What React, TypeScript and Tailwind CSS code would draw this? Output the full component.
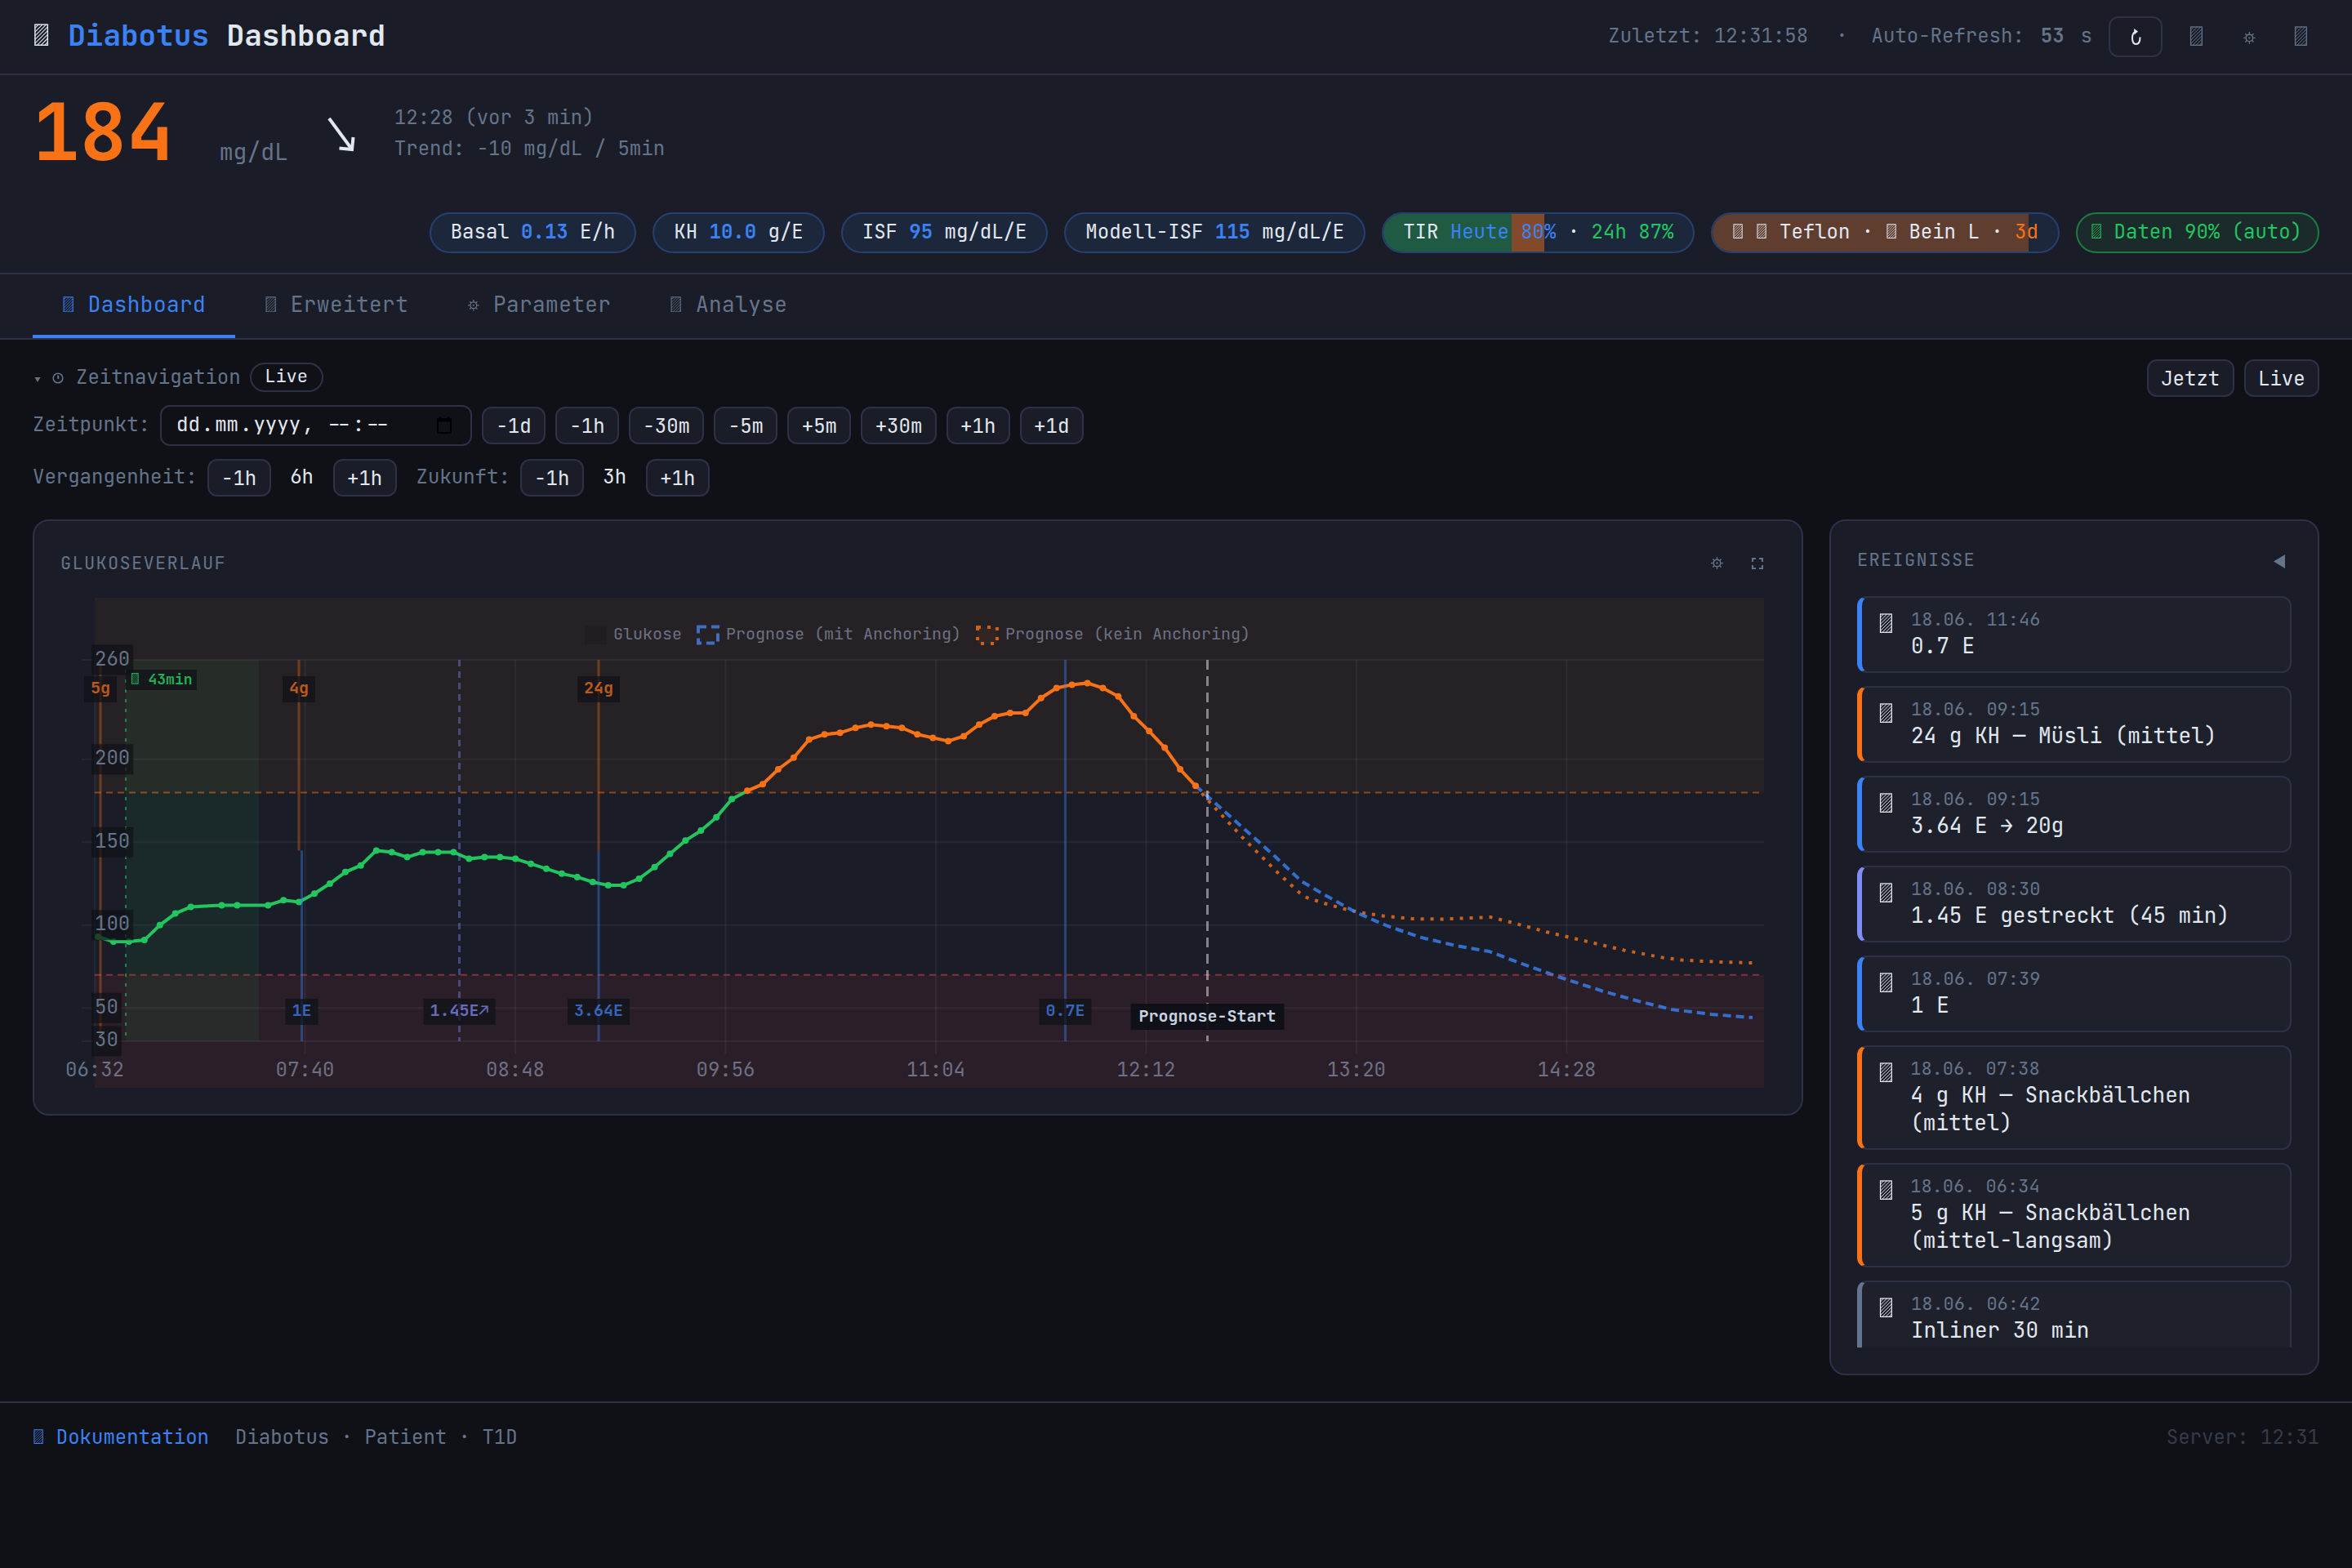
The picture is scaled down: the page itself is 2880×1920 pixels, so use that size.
import React, { useState } from "react";

const MONO = "font-['JetBrains_Mono','DejaVu_Sans_Mono',monospace]";

// hatched rectangle strokes, in 1/100 em
const hatch = (() => {
  const [x0, y0, x1, y1] = [8, 3, 51, 73];
  let d = "";
  for (let c = x0 + y0 + 12; c < x1 + y1; c += 13) {
    const ax = Math.max(x0, c - y1);
    const bx = Math.min(x1, c - y0);
    d += `M${ax} ${c - ax}L${bx} ${c - bx}`;
  }
  return d;
})();

const Box = () => (
  <svg viewBox="0 0 60 76" className="inline-block h-[0.76em] w-[0.6em] align-[-0.01em]" fill="none" stroke="currentColor">
    <rect x="8" y="3" width="43" height="70" strokeWidth="4" />
    <path d={hatch} strokeWidth="3" />
  </svg>
);

const Gear = ({ className = "h-[0.6em] w-[0.6em]" }: { className?: string }) => (
  <svg viewBox="0 0 60 60" className={`inline-block align-[0.02em] ${className}`} fill="none" stroke="currentColor">
    <circle cx="30" cy="30" r="15" strokeWidth="5" />
    <circle cx="30" cy="30" r="4" fill="currentColor" stroke="none" />
    <path
      d="M30 4V13M30 47V56M4 30H13M47 30H56M12 12L19 19M41 41L48 48M48 12L41 19M19 41L12 48"
      strokeWidth="5"
    />
  </svg>
);

const Pill = ({ children }: { children: React.ReactNode }) => (
  <div className="relative flex h-[50px] items-center overflow-hidden rounded-full border-2 border-[#25406f] bg-[#1d273b] px-6 pb-[2px] whitespace-pre">
    {children}
  </div>
);

const Btn = ({ children }: { children: React.ReactNode }) => (
  <button className="h-[46px] rounded-xl border-2 border-[#2d3148] bg-[#1a1d27] px-[15.4px] pt-px leading-none whitespace-pre text-[#e2e8f0]">
    {children}
  </button>
);

const Header = () => (
  <header className="flex h-[92px] items-center justify-between border-b-2 border-[#2d3148] bg-[#1a1d27] px-10">
    <h1 className="mb-[5px] text-4xl leading-none font-bold whitespace-pre">
      <Box /> <span className="text-[#3b82f6]">Diabotus</span> Dashboard
    </h1>
    <div className="flex items-center gap-5 text-[#64748b]">
      <span className="mb-[3px]">Zuletzt: 12:31:58</span>
      <span className="mr-[9px] mb-[3px] ml-[14px]">·</span>
      <span className="mb-[3px]">Auto-Refresh:</span>
      <span className="mb-[3px] font-bold">53</span>
      <span className="mb-[3px]">s</span>
      <button className="flex h-[50px] w-[66px] items-center justify-center rounded-xl border-2 border-[#2d3148] text-[#e2e8f0]">
        <svg width="13" height="22" viewBox="0 0 13 22" fill="none" stroke="currentColor" strokeWidth="2">
          <path d="M5 5C2.500 7 2 9.500 2 12.500C2 17 3.500 20 6.500 20C9.500 20 11.500 17.500 11.500 11.500" />
          <path d="M4 1L9 4.500L4.500 8.500Z" fill="currentColor" stroke="none" />
        </svg>
      </button>
      <span className="w-11 text-center text-[32px] leading-none"><Box /></span>
      <span className="w-11 text-center text-[28px] leading-none"><Gear /></span>
      <span className="w-11 text-center text-[32px] leading-none"><Box /></span>
    </div>
  </header>
);

const Status = () => (
  <section className="flex h-[244px] flex-col justify-between border-b-2 border-[#2d3148] bg-[#1a1d27] px-10 pb-6">
    <div className="flex pt-[22px]">
      <div className="text-[96px] leading-[96px] font-bold text-[#f97316]">184</div>
      <div className="ml-[56px] pt-[58px] text-[28px] leading-[28px] text-[#64748b]">mg/dL</div>
      <svg className="mt-[27px] ml-[46px] shrink-0" width="40" height="48" viewBox="0 0 40 48" fill="none" stroke="#e2e8f0" strokeWidth="4">
        <path d="M4 4L32 42" />
        <path d="M16.500 40.500L32 42L33.500 27" />
      </svg>
      <div className="ml-[44px] pt-[11px] leading-[38px] text-[#64748b]">
        <div>12:28 (vor 3 min)</div>
        <div>Trend: −10 mg/dL / 5min</div>
      </div>
    </div>
    <div className="flex justify-end gap-5">
      <Pill>Basal <b className="text-[#3b82f6]">0.13</b> E/h</Pill>
      <Pill>KH <b className="text-[#3b82f6]">10.0</b> g/E</Pill>
      <Pill>ISF <b className="text-[#3b82f6]">95</b> mg/dL/E</Pill>
      <Pill>Modell-ISF <b className="text-[#3b82f6]">115</b> mg/dL/E</Pill>
      <Pill>
        <span className="absolute inset-y-0 left-0 w-[157px] bg-[#1f5a43]" />
        <span className="absolute inset-y-0 left-[157px] w-10 bg-[#824a2a]" />
        <span className="relative">
          TIR <span className="text-[#3b82f6]">Heute 80%</span> · <span className="text-[#22c55e]">24h 87%</span>
        </span>
      </Pill>
      <Pill>
        <span className="absolute inset-y-0 left-0 w-[387px] bg-[#5f3e30]" />
        <span className="relative">
          <Box /> <Box /> Teflon · <Box /> Bein L · <span className="text-[#f97316]">3d</span>
        </span>
      </Pill>
      <div className="flex h-[50px] items-center rounded-full border-2 border-[#1e7a42] bg-[#1b2a2a] pr-[19px] pl-4 pb-[2px] whitespace-pre text-[#22c55e]">
        <span><Box /> Daten 90% (auto)</span>
      </div>
    </div>
  </section>
);

const tabs = ["Dashboard", "Erweitert", "Parameter", "Analyse"];

const Tabs = () => {
  const [active, setActive] = useState("Dashboard");
  return (
    <nav className="flex h-20 border-b-2 border-[#2d3148] bg-[#1a1d27] px-10 text-[26px] tracking-[0.45px]">
      {tabs.map((tab) => (
        <button
          key={tab}
          onClick={() => setActive(tab)}
          className={`border-b-4 px-9 leading-none whitespace-pre ${
            active === tab ? "border-[#3b82f6] text-[#3b82f6]" : "border-transparent text-[#64748b]"
          }`}
        >
          {tab === "Parameter" ? <Gear /> : <Box />} {tab}
        </button>
      ))}
    </nav>
  );
};

const steps = ["−1d", "−1h", "−30m", "−5m", "+5m", "+30m", "+1h", "+1d"];

const TimeNav = () => (
  <section className="px-10 pt-6 text-[#64748b]">
    <div className="flex h-[46px] items-center">
      <svg width="12" height="10" viewBox="0 0 12 10" className="mt-[3px]">
        <path d="M2.500 2H9.500L6 8Z" fill="currentColor" />
      </svg>
      <svg width="14" height="14" viewBox="0 0 14 14" className="ml-[12px]" fill="none" stroke="currentColor" strokeWidth="1.6">
        <circle cx="7" cy="7" r="5.800" />
        <path d="M7 3.500V7.500M7.500 4V8" />
      </svg>
      <span className="mb-[3px] ml-[15px]">Zeitnavigation</span>
      <span className="mt-[-2px] ml-[11px] flex h-9 w-[90px] items-center justify-center rounded-full border-2 border-[#2d3148] pb-[3px] text-[22px] text-[#e2e8f0]">
        Live
      </span>
      <div className="ml-auto flex gap-3">
        <Btn>Jetzt</Btn>
        <Btn>Live</Btn>
      </div>
    </div>
    <div className="mt-[10px] flex h-[50px] items-center gap-3">
      <span className="mb-[3px]">Zeitpunkt:</span>
      <div className="flex h-[50px] w-[382px] items-center justify-between rounded-xl border-2 border-[#2d3148] bg-[#0f1117] pr-[22px] pl-4 text-[#e2e8f0]">
        <div className="mb-[3px] flex whitespace-pre">
          <span className="px-[2px]">dd</span>.<span className="px-[2px]">mm</span>.<span className="px-[2px]">yyyy</span>, <span className="px-[2px]">--</span>:<span className="px-[2px]">--</span>
        </div>
        <svg width="20" height="22" viewBox="0 0 20 22" className="text-black" fill="none" stroke="currentColor" strokeWidth="2">
          <path d="M2 3H18V20H2Z" />
          <path d="M2 5H18M5 0V4M15 0V4" strokeWidth="3" />
        </svg>
      </div>
      {steps.map((s) => (
        <Btn key={s}>{s}</Btn>
      ))}
    </div>
    <div className="mt-4 flex h-[46px] items-center gap-3">
      <span className="mb-[3px]">Vergangenheit:</span>
      <Btn>−1h</Btn>
      <span className="mb-[3px] w-[52px] text-center text-[#e2e8f0]">6h</span>
      <Btn>+1h</Btn>
      <span className="mb-[3px] ml-3">Zukunft:</span>
      <Btn>−1h</Btn>
      <span className="mb-[3px] w-[52px] text-center text-[#e2e8f0]">3h</span>
      <Btn>+1h</Btn>
    </div>
  </section>
);

// one reading every 5 minutes, null where the sensor dropped out
const readings: (number | null)[] = [
  93, 90, 90, 91, 100, 107, 111, null, 112, 112, null, 112, 115, 114, 119, 125, 132, 136, 145, 144, 141, 144, 144, 144,
  140, 141, 141, 140, 137, 134, 131, 129, 126, 124, 124, 128, 135, 143, 151, 157, 165, 176, 181, 185, 194, 201, 212, 215,
  216, 219, 221, 220, 219, 215, 213, 211, 214, 221, 226, 228, 228, 237, 243, 245, 246, 243, 238, 226, 217, 207, 194, 184,
];

const LEFT = 42;
const RIGHT = 2086;
const TOP = 76;
const BOTTOM = 543;
const yOf = (v: number) => TOP + (260 - v) * 2.03;

const points = readings
  .map((v, i) => (v === null ? null : { v, x: 46 + i * 18.93, y: yOf(v) }))
  .filter((p): p is { v: number; x: number; y: number } => p !== null);
const lineOf = (ps: { x: number; y: number }[]) => ps.map((p) => `${p.x.toFixed(1)},${p.y.toFixed(1)}`).join(" ");
const firstHigh = points.findIndex((p) => p.v > 180);

const anchored =
  "1390,230 1404,242.500 1486,315.500 1519.500,347 1544,361.500 1586,385 1624,401.500 1664.500,415.500 1709,426 1749.500,433 1789.500,448 1834,464 1888,481.500 1932.500,494 1972.500,504 2021.500,510 2072,514";
const unanchored =
  "1390,230 1399,241 1407,250 1448,294 1490,336 1517,361 1526,367 1549,374.500 1572,381 1596,386 1619.500,389.500 1655,393 1691,393.500 1727.500,392 1751,391 1775,397 1821,409.500 1868,420.500 1914.500,431.500 1961.500,440.500 1985,443.500 2033,446 2072,447";

const xTicks = ["06:32", "07:40", "08:48", "09:56", "11:04", "12:12", "13:20", "14:28"];
const yTicks = [260, 200, 150, 100, 50, 30];

const Tag = ({ x, y, text, color }: { x: number; y: number; text: string; color: string }) => {
  const w = text.length * 12 + 16;
  return (
    <g opacity="0.7">
      <rect x={x - w / 2} y={y} width={w} height="32" fill="#0f1117" />
      <text x={x} y={y + 21} fill={color} fontSize="20" fontWeight="700" textAnchor="middle">
        {text}
      </text>
    </g>
  );
};

const GlucoseChart = () => (
  <svg width="2100" height="600" viewBox="0 0 2100 600" className="block">
    {yTicks.map((v) => (
      <path key={v} d={`M26 ${yOf(v)}H${RIGHT}`} stroke="#fff" strokeOpacity="0.05" strokeWidth="2" />
    ))}
    {xTicks.map((t, i) => (
      <g key={t}>
        <path d={`M${LEFT + i * 257.5} ${TOP}V559`} stroke="#fff" strokeOpacity="0.05" strokeWidth="2" />
        <text x={LEFT + i * 257.5} y="586" fill="#64748b" fontSize="24" textAnchor="middle">
          {t}
        </text>
      </g>
    ))}

    <g fill="#64748b" fontSize="20">
      <rect x="642" y="34" width="27" height="23" fill="#151a24" />
      <text x="677" y="51">Glukose</text>
      <rect x="781" y="35.500" width="24" height="20" fill="none" stroke="#3b82f6" strokeOpacity="0.8" strokeWidth="4" strokeDasharray="10 6" />
      <text x="815" y="51">Prognose (mit Anchoring)</text>
      <rect x="1123" y="36" width="24" height="20" fill="#f97316" fillOpacity="0.06" stroke="#f97316" strokeOpacity="0.8" strokeWidth="4" strokeDasharray="4 8" />
      <text x="1157" y="51">Prognose (kein Anchoring)</text>
    </g>

    <rect x={LEFT} y="0" width={RIGHT - LEFT} height={yOf(180)} fill="#f97316" fillOpacity="0.055" />
    <rect x={LEFT} y={yOf(70)} width={RIGHT - LEFT} height={600 - yOf(70)} fill="#ef4444" fillOpacity="0.08" />
    <rect x="80" y={TOP} width="163" height={BOTTOM - TOP} fill="#22c55e" fillOpacity="0.08" />

    <polyline points={unanchored} fill="none" stroke="#f97316" strokeOpacity="0.8" strokeWidth="4" strokeDasharray="4 8" />
    <polyline points={anchored} fill="none" stroke="#3b82f6" strokeOpacity="0.8" strokeWidth="4" strokeDasharray="10 6" />
    <polyline points={lineOf(points.slice(0, firstHigh + 1))} fill="none" stroke="#22c55e" strokeWidth="4" />
    <polyline points={lineOf(points.slice(firstHigh))} fill="none" stroke="#f97316" strokeWidth="4" />
    {points.map((p) => (
      <circle key={p.x} cx={p.x} cy={p.y} r="4" fill={p.v > 180 ? "#f97316" : "#22c55e"} />
    ))}

    <path d={`M${LEFT} ${yOf(180)}H${RIGHT}`} stroke="#f97316" strokeOpacity="0.5" strokeWidth="2" strokeDasharray="8 6" />
    <path d={`M${LEFT} ${yOf(70)}H${RIGHT}`} stroke="#ef4444" strokeOpacity="0.5" strokeWidth="2" strokeDasharray="8 6" />

    <g strokeWidth="3">
      <path d={`M49 ${TOP}V${BOTTOM}M292 ${TOP}V309.500M659 ${TOP}V309.500`} stroke="#f97316" strokeOpacity="0.35" />
      <path d={`M295.500 309.500V${BOTTOM}M659 309.500V${BOTTOM}M1230.500 ${TOP}V${BOTTOM}`} stroke="#3b82f6" strokeOpacity="0.4" />
      <path d={`M488.500 ${TOP}V${BOTTOM}`} stroke="#818cf8" strokeOpacity="0.4" strokeDasharray="8 6" />
      <path d={`M1404.500 ${TOP}V${BOTTOM}`} stroke="#fff" strokeOpacity="0.45" strokeDasharray="12 8" />
    </g>
    <path d={`M80 ${TOP}V${BOTTOM}`} stroke="#22c55e" strokeOpacity="0.6" strokeWidth="2" strokeDasharray="4 8" />

    {yTicks.map((v) => (
      <g key={v}>
        <rect x="38" y={yOf(v) - 18.5} width={String(v).length * 14.4 + 8} height="37" fill="#0f1117" fillOpacity="0.7" />
        <text x="42" y={yOf(v) + 6.5} fill="#64748b" fontSize="24">
          {v}
        </text>
      </g>
    ))}

    <Tag x={49} y={96} text="5g" color="#f97316" />
    <Tag x={292} y={96} text="4g" color="#f97316" />
    <Tag x={659} y={96} text="24g" color="#f97316" />
    <Tag x={295.5} y={491} text="1E" color="#3b82f6" />
    <Tag x={488.5} y={491} text="1.45E↗" color="#818cf8" />
    <Tag x={659} y={491} text="3.64E" color="#3b82f6" />
    <Tag x={1230.5} y={491} text="0.7E" color="#3b82f6" />

    <rect x="80" y="88" width="87" height="25" fill="#0f1117" fillOpacity="0.7" />
    <g stroke="#22c55e" fill="none" opacity="0.85" transform="translate(86 92) scale(0.18)">
      <rect x="8" y="3" width="43" height="70" strokeWidth="6" />
      <path d={hatch} strokeWidth="4" />
    </g>
    <text x="107.500" y="106" fill="#22c55e" fillOpacity="0.9" fontSize="18" fontWeight="700">
      43min
    </text>

    <rect x="1310.500" y="497" width="188" height="32" fill="#0f1117" fillOpacity="0.95" />
    <text x="1404.500" y="519" fill="#cbd5e1" fontSize="20" fontWeight="700" textAnchor="middle">
      Prognose-Start
    </text>
  </svg>
);

const ChartCard = () => (
  <div className="h-[730px] w-[2168px] rounded-[20px] border-2 border-[#2d3148] bg-[#1a1d27] px-8">
    <div className="flex h-[94px] items-center justify-between pt-[9px] pr-[15px] text-[#64748b]">
      <span className="text-[22px] tracking-[1.3px]">GLUKOSEVERLAUF</span>
      <div className="flex items-center gap-[34px]">
        <Gear className="h-[17px] w-[17px]" />
        <svg width="14" height="14" viewBox="0 0 14 14" fill="none" stroke="currentColor" strokeWidth="2">
          <path d="M1 5V1H5M9 1H13V5M13 9V13H9M5 13H1V9" />
        </svg>
      </div>
    </div>
    <GlucoseChart />
  </div>
);

const events = [
  { time: "18.06. 11:46", text: "0.7 E", color: "border-l-[#3b82f6]" },
  { time: "18.06. 09:15", text: "24 g KH — Müsli (mittel)", color: "border-l-[#f97316]" },
  { time: "18.06. 09:15", text: "3.64 E → 20g", color: "border-l-[#3b82f6]" },
  { time: "18.06. 08:30", text: "1.45 E gestreckt (45 min)", color: "border-l-[#818cf8]" },
  { time: "18.06. 07:39", text: "1 E", color: "border-l-[#3b82f6]" },
  { time: "18.06. 07:38", text: "4 g KH — Snackbällchen (mittel)", color: "border-l-[#f97316]" },
  { time: "18.06. 06:34", text: "5 g KH — Snackbällchen (mittel-langsam)", color: "border-l-[#f97316]" },
  { time: "18.06. 06:42", text: "Inliner 30 min", color: "border-l-[#64748b]" },
];

const Events = () => (
  <aside className="h-[1048px] w-[600px] rounded-[20px] border-2 border-[#2d3148] bg-[#1a1d27] px-8 pb-8">
    <div className="flex h-[92px] items-center justify-between pt-[3px] pr-2 text-[#64748b]">
      <span className="text-[22px] tracking-[1.3px]">EREIGNISSE</span>
      <svg width="14" height="18" viewBox="0 0 14 18" className="mt-[5px]">
        <path d="M14 0V17L0 8.500Z" fill="currentColor" />
      </svg>
    </div>
    <div className="flex h-[920px] flex-col gap-4 overflow-hidden">
      {events.map((e, i) => (
        <div
          key={i}
          className={`flex shrink-0 gap-5 rounded-xl border-2 border-l-[6px] border-[#2d3148] bg-[#1e212b] pt-3 pr-5 pb-[14px] pl-5 ${e.color}`}
        >
          <div className="flex w-5 items-start pt-[7px] text-[32px] leading-none">
            <Box />
          </div>
          <div>
            <div className="mb-px text-[22px] leading-[29px] text-[#64748b]">{e.time}</div>
            <div className="text-[26px] leading-[34px]">{e.text}</div>
          </div>
        </div>
      ))}
    </div>
  </aside>
);

const Footer = () => (
  <footer className="mt-8 flex justify-between border-t-2 border-[#2d3148] px-10 pt-[26px] leading-8">
    <div className="flex gap-8 whitespace-pre text-[#64748b]">
      <a className="text-[#3b82f6]"><Box /> Dokumentation</a>
      <span>Diabotus · Patient · T1D</span>
    </div>
    <span className="text-[#343c4a]">Server: 12:31</span>
  </footer>
);

export default function App() {
  return (
    <div className={`h-[1920px] w-[2880px] overflow-hidden bg-[#0f1117] text-2xl text-[#e2e8f0] ${MONO}`}>
      <Header />
      <Status />
      <Tabs />
      <TimeNav />
      <main className="flex items-start justify-between px-10 pt-7">
        <ChartCard />
        <Events />
      </main>
      <Footer />
    </div>
  );
}
